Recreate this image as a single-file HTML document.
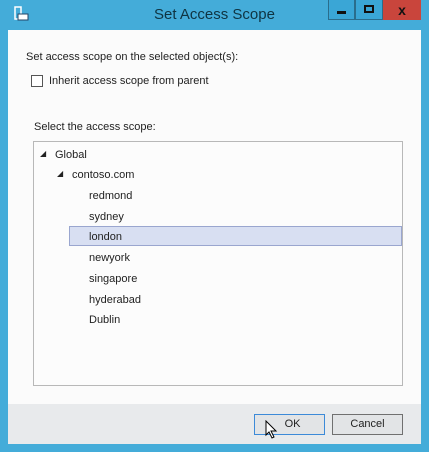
<!DOCTYPE html><html><head><style>
body{margin:0;width:429px;height:452px;background:#3aa6d6;font-family:"Liberation Sans",sans-serif;position:relative;overflow:hidden;font-size:11px;color:#222}
.a{position:absolute}
.t{position:absolute;white-space:nowrap}
</style></head><body>
<div class="a" style="left:0;top:0;width:429px;height:452px;background:#44acd9"></div>
<div class="t" style="left:0;width:429px;top:6px;text-align:center;font-size:15px;color:#0f3442">Set Access Scope</div>
<svg class="a" style="left:14px;top:6px" width="16" height="16"><rect x="1" y="1" width="6" height="12" fill="none" stroke="#fff" stroke-width="1.5"/><rect x="4" y="8" width="10" height="6" fill="#fff" stroke="#246" stroke-width="1"/></svg>
<div class="a" style="left:328px;top:0;width:27px;height:20px;background:#3aa6d6;border:1px solid #2a6d8c;border-top:none;box-sizing:border-box"></div>
<div class="a" style="left:337px;top:11px;width:9px;height:3px;background:#111"></div>
<div class="a" style="left:355px;top:0;width:28px;height:20px;background:#3aa6d6;border:1px solid #2a6d8c;border-top:none;box-sizing:border-box"></div>
<div class="a" style="left:364px;top:5px;width:10px;height:8px;border:2px solid #111;box-sizing:border-box"></div>
<div class="a" style="left:383px;top:0;width:38px;height:20px;background:#c9453c"></div>
<div class="t" style="left:383px;width:38px;top:2px;text-align:center;font-size:14px;font-weight:bold;color:#111">x</div>
<div class="a" style="left:8px;top:30px;width:413px;height:414px;background:#fbfbfb"></div>
<div class="a" style="left:8px;top:404px;width:413px;height:40px;background:#e8eaec"></div>
<div class="t" style="left:26px;top:51px">Set access scope on the selected object(s):</div>
<div class="a" style="left:31px;top:75px;width:12px;height:12px;border:1px solid #555;box-sizing:border-box;background:#fff"></div>
<div class="t" style="left:49px;top:75px">Inherit access scope from parent</div>
<div class="t" style="left:34px;top:121px">Select the access scope:</div>
<div class="a" style="left:33px;top:141px;width:370px;height:245px;border:1px solid #b8b8b8;box-sizing:border-box;background:#fcfcfc"></div>
<div class="a" style="left:69px;top:226px;width:333px;height:20px;background:#d8dff2;border:1px solid #9aa6cf;box-sizing:border-box"></div>
<div class="t" style="left:40px;top:149px;font-size:8px">◢</div>
<div class="t" style="left:57px;top:169px;font-size:8px">◢</div>
<div class="t" style="left:55px;top:149px">Global</div>
<div class="t" style="left:72px;top:169px">contoso.com</div>
<div class="t" style="left:89px;top:190px">redmond</div>
<div class="t" style="left:89px;top:211px">sydney</div>
<div class="t" style="left:89px;top:231px">london</div>
<div class="t" style="left:89px;top:252px">newyork</div>
<div class="t" style="left:89px;top:273px">singapore</div>
<div class="t" style="left:89px;top:294px">hyderabad</div>
<div class="t" style="left:89px;top:314px">Dublin</div>
<div class="a" style="left:254px;top:414px;width:71px;height:21px;border:1px solid #3c8ad8;box-sizing:border-box;background:#e2e4e6"></div>
<div class="t" style="left:254px;width:71px;top:418px;text-align:center">&nbsp;&nbsp;OK</div>
<div class="a" style="left:332px;top:414px;width:71px;height:21px;border:1px solid #707070;box-sizing:border-box;background:#e2e4e6"></div>
<div class="t" style="left:332px;width:71px;top:418px;text-align:center">Cancel</div>
<svg class="a" style="left:265px;top:420px" width="14" height="20"><path d="M1 1 L1 15 L4 12 L7 18 L9 17 L6 11 L11 11 Z" fill="#fff" stroke="#000"/></svg>
</body></html>
